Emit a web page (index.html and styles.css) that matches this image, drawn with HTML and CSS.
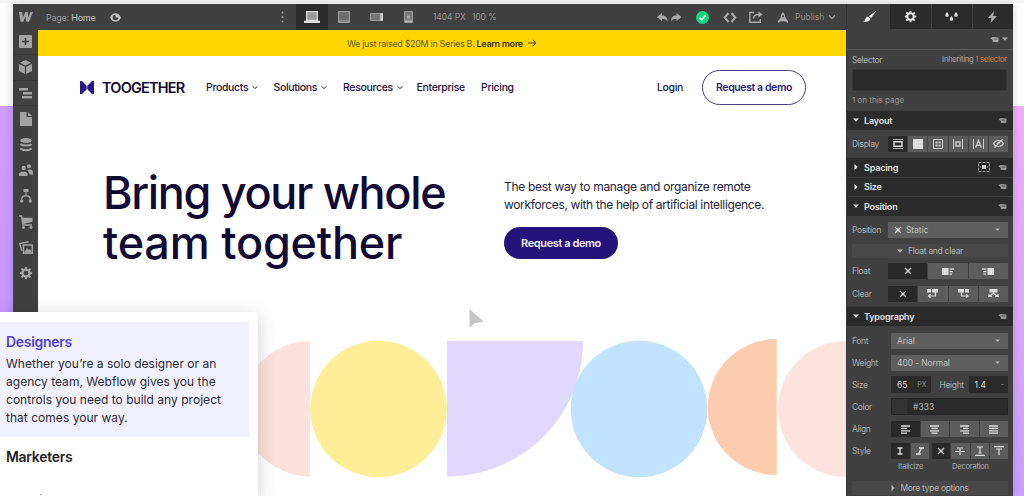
FILE: index.html
```html
<!DOCTYPE html>
<html lang="en">
<head>
    <meta charset="UTF-8">
    <meta name="viewport" content="width=device-width, initial-scale=1.0">
    <title>Toogether - Designer</title>
    <link rel="stylesheet" href="styles.css">
</head>
<body>
    <!-- shared icons -->
    <svg class="defs" width="0" height="0">
        <symbol id="gear" viewBox="0 0 16 16">
            <path fill-rule="evenodd" fill="currentColor" d="M7 1h2l.4 2 1.3.6L12.500 2.400l1.300 1.300-1.200 1.700.6 1.400 1.900.3v1.900l-1.900.3-.6 1.400 1.200 1.700-1.300 1.300-1.700-1.200-1.400.6L9 15H7l-.4-1.900-1.300-.6-1.800 1.200-1.300-1.300 1.200-1.700-.6-1.400L1 9V7l1.800-.3.6-1.400-1.200-1.700 1.300-1.300 1.700 1.200 1.400-.6zM8 5.300a2.700 2.700 0 1 0 0 5.400 2.700 2.700 0 0 0 0-5.400z"/>
        </symbol>
        <symbol id="cap" viewBox="0 0 10 8">
            <path fill="currentColor" d="M0 2.300 3.500 1 9.500 1.800V6.500H8.300V7L3 6.500V4.500zM8.300 3.200 3.500 3v.7l4.800.3z"/>
        </symbol>
        <symbol id="cross" viewBox="0 0 8 8">
            <path stroke="currentColor" stroke-width="1.200" d="M1 1l6 6M7 1L1 7"/>
        </symbol>
        <symbol id="down" viewBox="0 0 6 4">
            <path fill="currentColor" d="M0 .5h6L3 3.700z"/>
        </symbol>
        <symbol id="right" viewBox="0 0 4 6">
            <path fill="currentColor" d="M.5 0v6L3.700 3z"/>
        </symbol>
        <symbol id="chevron" viewBox="0 0 8 6">
            <path fill="none" stroke="currentColor" stroke-width="1.300" d="M1 1.500l3 3 3-3"/>
        </symbol>
    </svg>

    <div class="stage">
        <div class="designer">
            <aside class="sidebar">
                <span class="tool"><svg width="14" height="10" viewBox="0 0 14 10"><path fill="currentColor" d="M0 0h3.300l.5 5.500L6.500 0h2.300l.6 5.500L11.300 0H14L10 9.800H7.300l-.8-5-2.200 5H1.500z"/></svg></span>
                <span class="tool line"><svg width="13" height="13" viewBox="0 0 13 13"><rect width="13" height="13" rx="1" fill="currentColor"/><path stroke="#404040" stroke-width="1.600" d="M6.500 3v7M3 6.500h7"/></svg></span>
                <span class="tool line"><svg width="13" height="14" viewBox="0 0 13 14"><path fill="currentColor" d="M6.500 0 12 2.700 6.500 5.500 1 2.700zM0 4l5.900 2.700V14L0 11zM13 4 7.100 6.700V14l5.900-3z"/></svg></span>
                <span class="tool line"><svg width="13" height="11" viewBox="0 0 13 11"><path fill="currentColor" d="M0 0h9v2.600H0zM4 4h9v2.600H4zM3 8h10v2.600H3z"/></svg></span>
                <span class="tool"><svg width="12" height="14" viewBox="0 0 12 14"><path fill="currentColor" d="M0 0h6.500v5H12v9H0zM8 0l4 4H8z"/></svg></span>
                <span class="tool"><svg width="12" height="14" viewBox="0 0 12 14"><ellipse cx="6" cy="2.500" rx="5.700" ry="2.400" fill="currentColor"/><path fill="none" stroke="currentColor" stroke-width="2" d="M.5 6c2 2 9 2 11 0M.5 10.500c2 2.200 9 2.200 11 0"/></svg></span>
                <span class="tool"><svg width="14" height="12" viewBox="0 0 14 12"><g fill="currentColor"><circle cx="4.700" cy="4" r="2.200"/><circle cx="10" cy="2.300" r="2"/><path d="M0 12V9.500C1 7 8 7 8.500 9.500V12zM8.500 6.500C9 5 14 5 14 8v2.500h-3z"/></g></svg></span>
                <span class="tool"><svg width="12" height="14" viewBox="0 0 12 14"><g fill="currentColor"><rect x="3.500" width="5" height="3"/><circle cx="1.700" cy="12" r="1.700"/><circle cx="10.300" cy="12" r="1.700"/></g><path fill="none" stroke="currentColor" stroke-width="1.300" d="M6 3v3.500M1.700 10.500c0-5 8.600-5 8.600 0"/></svg></span>
                <span class="tool"><svg width="14" height="14" viewBox="0 0 14 14"><path fill="none" stroke="currentColor" stroke-width="1.400" d="M0 1h2.500l1.500 9h9"/><path fill="currentColor" d="M3 2.700h10.500V7L4 9z"/><circle cx="4.500" cy="12.500" r="1.500" fill="currentColor"/><circle cx="12" cy="12.500" r="1.500" fill="currentColor"/></svg></span>
                <span class="tool"><svg width="14" height="13" viewBox="0 0 14 13"><path fill="none" stroke="currentColor" stroke-width="1.400" d="M4.500 4h8.800v8.300H4.500zM2.700 9.500.8 2.500l9-1.800"/><path fill="currentColor" d="M5 11.500 8 7l2 2 1-1 2 3.500z"/></svg></span>
                <span class="tool"><svg width="14" height="14"><use href="#gear"/></svg></span>
            </aside>

            <main class="workspace">
                <header class="topbar">
                    <span class="page-name">Page: <b>Home</b></span>
                    <svg class="eye" width="11" height="9" viewBox="0 0 11 9"><path fill-rule="evenodd" fill="#c4c4c4" d="M0 4.500C2.500-1.200 8.500-1.200 11 4.500 8.500 10.200 2.500 10.200 0 4.500zM5.500 1.700a2.800 2.800 0 1 0 2.800 2.800H5.500z"/></svg>
                    <svg class="dots" width="3" height="12" viewBox="0 0 3 12"><g fill="#999"><circle cx="1.500" cy="1.500" r="1"/><circle cx="1.500" cy="6" r="1"/><circle cx="1.500" cy="10.500" r="1"/></g></svg>
                    <div class="devices">
                        <span class="device active"><svg width="16" height="12" viewBox="0 0 16 12"><path fill="#999" stroke="#d5d5d5" stroke-width="1.300" d="M2.600.7h10.800v8.600H2.600z"/><path fill="#e0e0e0" d="M0 9.700h16V12H0z"/></svg></span>
                        <span class="device"><svg width="12" height="12" viewBox="0 0 12 12"><path fill="#6c6c6c" stroke="#999" stroke-width="1.200" d="M.6.6h10.800v10.800H.6z"/><path stroke="#aaa" d="M1 10h10"/></svg></span>
                        <span class="device"><svg width="13" height="8" viewBox="0 0 13 8"><path fill="#777" stroke="#999" d="M.5.5h10v7H.5z"/><path fill="#ccc" d="M10.500 0H13v8h-2.500z"/></svg></span>
                        <span class="device"><svg width="9" height="12" viewBox="0 0 9 12"><path fill="#777" stroke="#999" d="M.5.5h8v11h-8z"/><circle cx="4.500" cy="6" r="1.700" fill="#aaa"/><path fill="#bbb" d="M1 9.500h7V11H1z"/></svg></span>
                    </div>
                    <span class="size">1404 PX</span>
                    <span class="size zoom">100 %</span>
                    <div class="actions">
                        <svg width="25" height="9" viewBox="0 0 25 9"><path fill="#aaa" d="M0 4 5 0v2.500c4 0 5.500 2.500 5.500 6C9 6.300 7.500 5.700 5 5.700V8zM24.500 4l-5-4v2.500c-4 0-5.500 2.500-5.500 6 1.500-2.200 3-2.800 5.500-2.800V8z"/></svg>
                        <svg class="saved" width="13" height="13" viewBox="0 0 13 13"><circle cx="6.500" cy="6.500" r="6.500" fill="#14d583"/><path fill="none" stroke="#fff" stroke-width="1.500" d="M3.600 6.700l2 2 3.900-4.100"/></svg>
                        <svg class="code" width="14" height="11" viewBox="0 0 14 11"><path fill="none" stroke="#aaa" stroke-width="2" d="M5.500 1 1.700 5.500l3.800 4.500M8.500 1l3.800 4.500L8.500 10"/></svg>
                        <svg class="share" width="14" height="12" viewBox="0 0 14 12"><path fill="none" stroke="#aaa" stroke-width="1.400" d="M5 1.500H.8v9.800h10.500V8M4.500 7.500c0-3 2-4 5.500-4"/><path fill="#aaa" d="M9.500.5 13.500 3.500l-4 3z"/></svg>
                        <svg class="rocket" width="10" height="11" viewBox="0 0 10 11"><path fill="#aaa" fill-rule="evenodd" d="M5 0c2 2 2.200 4 2.300 5.500L10 9v2L6.800 9.300H3.200L0 11V9l2.700-3.500C2.800 4 3 2 5 0zm0 3.200a1.100 1.100 0 1 0 0 2.200 1.100 1.100 0 0 0 0-2.200z"/></svg>
                        <span class="publish">Publish</span>
                        <svg class="publish-arrow" width="8" height="6"><use href="#chevron"/></svg>
                    </div>
                </header>

                <section class="site">
                    <div class="banner">
                        <span class="banner-text">We just raised $20M in Series B. <b>Learn more</b></span>
                        <svg width="9" height="8" viewBox="0 0 9 8"><path fill="none" stroke="#4a4220" d="M0 4h8M4.700.7 8 4 4.700 7.300"/></svg>
                    </div>
                    <nav class="nav">
                        <svg class="logo" width="14" height="13" viewBox="0 0 14 13"><path fill="#28187f" d="M0 0h2l4.700 4.700v3.600L2 13H0zM14 0h-2L7.300 4.700v3.600L12 13h2z"/></svg>
                        <span class="brand">TOOGETHER</span>
                        <div class="menu">
                            <span>Products <svg width="6" height="5"><use href="#chevron"/></svg></span>
                            <span>Solutions <svg width="6" height="5"><use href="#chevron"/></svg></span>
                            <span>Resources <svg width="6" height="5"><use href="#chevron"/></svg></span>
                            <span>Enterprise</span>
                            <span>Pricing</span>
                        </div>
                        <span class="login">Login</span>
                        <span class="demo outline">Request a demo</span>
                    </nav>
                    <div class="hero">
                        <h1>Bring your whole<br><span class="wide">team together</span></h1>
                        <div class="pitch">
                            <p>The best way to manage and organize remote<br><span class="tight">workforces, with the help of artificial intelligence.</span></p>
                            <span class="demo solid">Request a demo</span>
                        </div>
                    </div>
                    <svg class="shapes" width="808" height="196" viewBox="38 300 808 196">
                        <path fill="#fce2de" d="M310 341a67.750 67.750 0 0 0 0 135.500z"/>
                        <circle cx="378.500" cy="409" r="68.300" fill="#feee98"/>
                        <path fill="#e1d8ff" d="M447 341h136c0 75-60.500 135.500-136 135.500z"/>
                        <circle cx="639" cy="409" r="68.300" fill="#c1e3ff"/>
                        <path fill="#fdcbae" d="M776.700 339a69 68 0 0 0 0 136z"/>
                        <circle cx="846" cy="409" r="68" fill="#fde3df"/>
                        <path fill="#c6c6c6" stroke="#c6c6c6" stroke-linejoin="round" d="M470 310v17l5-4.500 8-1z"/>
                    </svg>
                </section>
            </main>

            <aside class="panel">
                <div class="tabs">
                    <span class="tab current"><svg width="13" height="11" viewBox="0 0 13 11"><path fill="#eee" d="M12.700 0 13 .4 8.200 7 6 5.200zM5.200 5.800l2.300 1.900C6.500 10.500 3 11.500 0 10.200c2-.2 2-1 2.500-2.500.5-1.300 1.500-2 2.700-1.900z"/></svg></span>
                    <span class="tab"><svg width="13" height="13"><use href="#gear"/></svg></span>
                    <span class="tab"><svg width="13" height="9" viewBox="0 0 13 9"><path fill="#ddd" d="M2 0c2.600 3.400 2 4.700 0 4.700S-.6 3.400 2 0zM6.500 4c2.600 3.400 2 4.800 0 4.800S3.900 7.400 6.500 4zM11 0c2.600 3.400 2 4.700 0 4.700S8.400 3.400 11 0z"/></svg></span>
                    <span class="tab"><svg width="9" height="12" viewBox="0 0 9 12"><path fill="#aaa" d="M6 0 0 7h3.500L2.500 12 9 5H5.200z"/></svg></span>
                </div>
                <div class="help"><svg width="9" height="7"><use href="#cap"/></svg><svg width="6" height="4"><use href="#down"/></svg></div>
                <div class="selector">
                    <div class="selector-top"><span>Selector</span><span class="inherit">Inheriting <em>1 selector</em></span></div>
                    <div class="selector-input"></div>
                    <div class="selector-note">1 on this page</div>
                </div>

                <h2 class="section"><svg class="arrow" width="6" height="4"><use href="#down"/></svg>Layout<svg class="cap" width="9" height="7"><use href="#cap"/></svg></h2>
                <div class="row display">
                    <label>Display</label>
                    <div class="buttons">
                        <span class="on"><svg width="10" height="10" viewBox="0 0 10 10"><path fill="none" stroke="#ddd" stroke-width="1.400" d="M1 2.700h8v4.600H1z"/><path fill="#aaa" d="M0 0h10v1H0zM0 9h10v1H0z"/></svg></span>
                        <span><svg width="10" height="10"><rect width="10" height="10" fill="#ddd"/></svg></span>
                        <span><svg width="10" height="10" viewBox="0 0 10 10"><path fill="none" stroke="#ccc" d="M.5.5h9v9h-9z"/><path fill="#ccc" d="M2.500 2.500h2v2h-2zM5.500 2.500h2v2h-2zM2.500 5.500h2v2h-2zM5.500 5.500h2v2h-2z"/></svg></span>
                        <span><svg width="10" height="10" viewBox="0 0 10 10"><path fill="none" stroke="#ccc" d="M.5 0v10M9.500 0v10"/><path fill="none" stroke="#ccc" stroke-width="1.500" d="M3 3h4v4H3z"/></svg></span>
                        <span><svg width="11" height="10" viewBox="0 0 11 10"><path fill="none" stroke="#ccc" d="M.5 0v10M10.500 0v10"/><path fill="none" stroke="#ccc" stroke-width="1.300" d="M2.700 8.500 5.500 1.500l2.800 7M3.700 6.300h3.600"/></svg></span>
                        <span><svg width="11" height="9" viewBox="0 0 11 9"><path fill="none" stroke="#ccc" stroke-width="1.200" d="M.6 4.500c2-4 7.800-4 9.800 0-2 4-7.800 4-9.800 0zM9.500.3l-8 8.400M4 5l2-2"/></svg></span>
                    </div>
                </div>

                <h2 class="section"><svg class="arrow" width="4" height="6"><use href="#right"/></svg>Spacing<svg class="spacing-box" width="12" height="10" viewBox="0 0 12 10"><path fill="none" stroke="#999" stroke-dasharray="3 1" d="M.5.5h11v9H.5z"/><path fill="#ccc" d="M4 3h4v4H4zM2 4.500h1v1H2zM9 4.500h1v1H9z"/></svg><svg class="cap" width="9" height="7"><use href="#cap"/></svg></h2>
                <h2 class="section"><svg class="arrow" width="4" height="6"><use href="#right"/></svg>Size<svg class="cap" width="9" height="7"><use href="#cap"/></svg></h2>
                <h2 class="section"><svg class="arrow" width="6" height="4"><use href="#down"/></svg>Position<svg class="cap" width="9" height="7"><use href="#cap"/></svg></h2>
                <div class="row position">
                    <label>Position</label>
                    <div class="select"><svg class="static" width="8" height="8"><use href="#cross"/></svg>Static<svg class="caret" width="5" height="3"><use href="#down"/></svg></div>
                </div>
                <div class="more"><svg width="6" height="4"><use href="#down"/></svg>Float and clear</div>
                <div class="row float">
                    <label>Float</label>
                    <div class="buttons">
                        <span class="on"><svg width="8" height="8"><use href="#cross"/></svg></span>
                        <span><svg width="12" height="7" viewBox="0 0 12 7"><path fill="#ddd" d="M0 0h6.500v7H0zM7.500.5H12v1.300H7.500zM7.500 3H11v1.300H7.500zM7.500 5.500H10v1.300H7.500z"/></svg></span>
                        <span><svg width="12" height="7" viewBox="0 0 12 7"><path fill="#ddd" d="M5.500 0H12v7H5.500zM0 .5h4.500v1.300H0zM1 3h3.500v1.300H1zM1.500 5.500H4v1.300H1.500z"/></svg></span>
                    </div>
                </div>
                <div class="row clear">
                    <label>Clear</label>
                    <div class="buttons">
                        <span class="on"><svg width="8" height="8"><use href="#cross"/></svg></span>
                        <span><svg width="11" height="9" viewBox="0 0 11 9"><path fill="#ddd" d="M0 0h4v3.500H0zM5 0h6v3.500H5z"/><path fill="none" stroke="#ddd" stroke-width="1.200" d="M8.500 3v4H2M3.500 5.300 1.500 7l2 1.700"/></svg></span>
                        <span><svg width="11" height="9" viewBox="0 0 11 9"><path fill="#ddd" d="M0 0h6v3.500H0zM7 0h4v3.500H7z"/><path fill="none" stroke="#ddd" stroke-width="1.200" d="M3.500 3v4H10M8 5.300 10 7 8 8.700"/></svg></span>
                        <span><svg width="11" height="9" viewBox="0 0 11 9"><path fill="#ddd" d="M1.500 0h8v3.500h-8z"/><path fill="none" stroke="#ddd" stroke-width="1.200" d="M5.500 3v1.500L1 7.300h3M5.500 4.500 10 7.300H7M1 5v2.500M10 5v2.500"/></svg></span>
                    </div>
                </div>

                <h2 class="section type"><svg class="arrow" width="6" height="4"><use href="#down"/></svg>Typography<svg class="cap" width="9" height="7"><use href="#cap"/></svg></h2>
                <div class="typography">
                    <div class="row"><label>Font</label><div class="select">Arial<svg class="caret" width="5" height="3"><use href="#down"/></svg></div></div>
                    <div class="row"><label>Weight</label><div class="select">400 - Normal<svg class="caret" width="5" height="3"><use href="#down"/></svg></div></div>
                    <div class="row sizes">
                        <label>Size</label>
                        <div class="field"><span>65</span><small>PX</small></div>
                        <label class="height">Height</label>
                        <div class="field"><span>1.4</span><small>-</small></div>
                    </div>
                    <div class="row"><label>Color</label><div class="color"><i></i><span>#333</span></div></div>
                    <div class="row align">
                        <label>Align</label>
                        <div class="buttons">
                            <span class="on"><svg width="9" height="9" viewBox="0 0 9 9"><path stroke="#ddd" stroke-width="1.300" d="M0 1h9M0 3.400h6M0 5.800h9M0 8.200h6"/></svg></span>
                            <span><svg width="9" height="9" viewBox="0 0 9 9"><path stroke="#ddd" stroke-width="1.300" d="M0 1h9M1.500 3.400h6M0 5.800h9M1.500 8.200h6"/></svg></span>
                            <span><svg width="9" height="9" viewBox="0 0 9 9"><path stroke="#ddd" stroke-width="1.300" d="M0 1h9M3 3.400h6M0 5.800h9M3 8.200h6"/></svg></span>
                            <span><svg width="9" height="9" viewBox="0 0 9 9"><path stroke="#ddd" stroke-width="1.300" d="M0 1h9M0 3.400h9M0 5.800h9M0 8.200h9"/></svg></span>
                        </div>
                    </div>
                    <div class="row style">
                        <label>Style</label>
                        <div class="buttons italic">
                            <span class="on"><svg width="6" height="8" viewBox="0 0 6 8"><path fill="none" stroke="#ddd" stroke-width="1.400" d="M.5 1h5M.5 7h5M3 1v6"/></svg></span>
                            <span><svg width="8" height="8" viewBox="0 0 8 8"><path fill="none" stroke="#ddd" stroke-width="1.400" d="M3 1h5M0 7h5M5.500 1l-3 6"/></svg></span>
                        </div>
                        <div class="buttons decoration">
                            <span class="on"><svg width="8" height="8"><use href="#cross"/></svg></span>
                            <span><svg width="10" height="8" viewBox="0 0 10 8"><path fill="none" stroke="#ddd" stroke-width="1.200" d="M2 1h6M5 1v7M0 4.500h10"/></svg></span>
                            <span><svg width="10" height="10" viewBox="0 0 10 10"><path fill="none" stroke="#ddd" stroke-width="1.200" d="M2 1h6M5 1v6M3.500 7h3M0 9.400h10"/></svg></span>
                            <span><svg width="10" height="10" viewBox="0 0 10 10"><path fill="none" stroke="#ddd" stroke-width="1.200" d="M0 .6h10M2 3h6M5 3v6"/></svg></span>
                        </div>
                    </div>
                    <div class="captions"><span>Italicize</span><span>Decoration</span></div>
                    <div class="more"><svg width="4" height="6"><use href="#right"/></svg>More type options</div>
                </div>
            </aside>
        </div>

        <div class="audience">
            <div class="audience-item open">
                <h3>Designers</h3>
                <p>Whether you’re a solo designer or an<br>agency team, Webflow gives you the<br>controls you need to build any project<br>that comes your way.</p>
            </div>
            <h3 class="audience-item">Marketers</h3>
            <i class="speck"></i>
        </div>
    </div>
</body>
</html>
```
FILE: styles.css
```css
* { box-sizing: border-box; }
body { margin: 0; background: #fff; font-family: Inter, "Liberation Sans", sans-serif; }
svg { display: block; flex: none; }
.defs { position: absolute; }
b { font-weight: 600; }

.stage { position: relative; width: 1024px; height: 496px; overflow: hidden; padding: 4px 11px 0 13px; background: linear-gradient(#f5f5f5 3px, #fdfdfd 3px, #fdfdfd 106px, transparent 106px), linear-gradient(to right, rgba(180, 140, 255, .55), rgba(180, 140, 255, 0)), linear-gradient(#eeb0f5 106px, #cba0ff 496px); }
.designer { display: flex; height: 492px; box-shadow: 0 0 9px rgba(0, 0, 0, .16); }

/* left tools */
.sidebar { width: 25px; background: #404040; color: #a3a3a3; }
.tool { display: flex; align-items: center; justify-content: center; height: 25.600px; }
.tool.line { border-bottom: 1px solid #393939; }

/* top bar */
.workspace { width: 808px; }
.topbar { display: flex; align-items: center; height: 26px; padding-left: 8px; background: #404040; color: #999; font-size: 9px; }
.page-name { width: 64px; letter-spacing: -.25px; }
.page-name b { color: #b5b5b5; font-weight: 500; }
.dots { margin-left: 160px; }
.devices { display: flex; align-self: stretch; margin-left: 12px; }
.device { display: flex; align-items: center; justify-content: center; width: 32px; }
.device.active { background: #2b2b2b; }
.size { margin-left: 9px; width: 31px; font-size: 8.500px; white-space: nowrap; letter-spacing: -.1px; }
.size.zoom { margin-left: 8px; }
.actions { display: flex; align-items: center; margin-left: auto; padding-right: 10px; }
.saved { margin-left: 14px; }
.code { margin-left: 14px; }
.share { margin-left: 12px; }
.rocket { margin-left: 15px; }
.publish { width: 33px; margin-left: 7px; font-size: 8.500px; color: #8f8f8f; }

/* site on the canvas */
.site { height: 466px; background: #fff; }
.banner { display: flex; align-items: center; height: 26px; padding-left: 309px; background: #ffd600; color: #6a5c12; font-size: 9px; }
.banner-text { width: 181px; white-space: nowrap; letter-spacing: -.33px; }
.banner b { color: #3a3417; }
.nav { display: flex; align-items: center; height: 62px; padding-left: 42px; color: #1b1440; font-size: 10.500px; font-weight: 500; }
.brand { width: 104px; margin-left: 8px; color: #120b33; font-size: 14.500px; font-weight: 600; letter-spacing: -.8px; }
.menu { display: grid; grid-template-columns: 67.500px 69.500px 73.500px 64.500px auto; width: 451px; letter-spacing: -.33px; }
.menu span { display: flex; align-items: center; gap: 4px; }
.login { width: 45px; letter-spacing: -.35px; }
.demo { display: flex; align-items: center; justify-content: center; border-radius: 18px; font-size: 10.500px; font-weight: 600; letter-spacing: -.4px; }
.outline { width: 104px; height: 35px; border: 1px solid #4a4080; color: #2b1d7c; }
.solid { width: 114px; height: 32px; background: #24147a; color: #f1efff; font-size: 11px; }
.hero { display: flex; height: 182px; padding: 50px 0 0 65px; }
h1 { width: 401px; margin: 0; color: #100a35; font-size: 45px; font-weight: 500; line-height: 50px; letter-spacing: -1.350px; white-space: nowrap; }
.wide { letter-spacing: -.2px; }
.pitch p { margin: 10px 0 13px; color: #252240; font-size: 12px; line-height: 18px; letter-spacing: -.3px; white-space: nowrap; }
.pitch p { letter-spacing: -.35px; word-spacing: .2px; }
.tight { word-spacing: 0; }

/* style panel */
.panel { width: 167px; height: 492px; overflow: hidden; background: #404040; border-left: 1px solid #333; color: #adadad; font-size: 8.500px; }
.tabs { display: flex; height: 25px; padding-left: 1px; }
.tab { display: flex; flex: 1; align-items: center; justify-content: center; background: #2b2b2b; border-left: 1px solid #404040; color: #e5e5e5; }
.tab.current { background: #404040; }
.help { display: flex; align-items: center; justify-content: flex-end; gap: 3px; height: 21px; padding-right: 5px; border-bottom: 1px solid #565656; color: #aaa; }
.selector { height: 60px; padding: 0 6px 0 5px; }
.selector-top { display: flex; align-items: center; justify-content: space-between; height: 19px; letter-spacing: -.4px; }
.inherit { font-size: 7.500px; letter-spacing: -.2px; }
.inherit em { color: #e07b3a; font-style: normal; }
.selector-input { height: 22px; background: #2b2b2b; border: 1px solid #363636; border-radius: 2px; }
.selector-note { height: 19px; font-size: 8px; line-height: 18px; color: #999; }
.section { display: flex; align-items: center; height: 19.500px; margin: 0; padding: 0 6px; background: #2b2b2b; border-top: 1px solid #3c3c3c; color: #e2e2e2; font-size: 9px; font-weight: 600; letter-spacing: -.2px; }
.arrow { width: 6px; margin-right: 5px; }
.cap { margin-left: auto; color: #999; }
.spacing-box { margin-left: auto; }
.spacing-box + .cap { margin-left: 8px; }
.row { display: flex; align-items: center; padding: 0 5px; }
.row label { width: 36px; flex: none; letter-spacing: -.35px; }
.display { height: 27.500px; padding-top: 1px; }
.buttons { display: flex; flex: 1; gap: 1px; height: 16px; }
.buttons span { display: flex; flex: 1; align-items: center; justify-content: center; background: #5c5c5c; color: #ddd; }
.buttons .on { background: #292929; }
.select { display: flex; flex: 1; align-items: center; height: 16px; padding: 0 8px 0 6px; background: #5e5e5e; border-radius: 1px; color: #c0c0c0; letter-spacing: -.1px; }
.static { margin-right: 4px; color: #eee; }
.caret { margin-left: auto; }
.position { height: 28px; }
.more { display: flex; align-items: center; justify-content: center; gap: 5px; height: 14px; margin: 0 5px; background: #484848; border-radius: 2px; color: #b5b5b5; letter-spacing: -.3px; }
.float { height: 27px; }
.clear { height: 18px; }
.type { height: 20px; margin-top: 3px; }
.typography { padding-top: 4px; }
.typography .row { height: 22.150px; }
.typography label { width: 39px; }
.field { display: flex; align-items: center; justify-content: space-between; width: 40px; height: 17px; padding: 0 4px 0 6px; background: #2b2b2b; color: #ddd; }
.field small { color: #888; font-size: 7px; }
.typography .height { width: 38px; padding-left: 9px; }
.color { display: flex; align-items: center; flex: 1; height: 17px; background: #2b2b2b; border: 1px solid #252525; }
.color i { width: 15px; height: 15px; background: #333; }
.color span { margin-left: 6px; }
.italic { flex: none; width: 38px; margin-right: 3px; }
.captions { display: flex; height: 10px; font-size: 7.500px; line-height: 10px; letter-spacing: -.2px; }
.captions span:first-child { width: 54px; margin-left: 51px; }
.typography .more { margin-top: 9px; }

/* audience card, lies over the designer window */
.audience { position: absolute; left: 0; top: 312px; width: 258px; height: 190px; padding-top: 10px; background: #fff; box-shadow: 0 4px 18px rgba(0, 0, 0, .2); }
.audience h3 { margin: 0; padding-left: 6px; color: #222; font-size: 14px; font-weight: 600; line-height: 20px; letter-spacing: -.3px; }
.open { width: 249px; height: 115px; padding-top: 10px; background: #f1f0ff; }
.audience .open h3 { color: #5340cf; }
.open p { margin: 3px 0 0 6px; color: #2a2a35; font-size: 12px; line-height: 18px; letter-spacing: .03px; white-space: nowrap; }
.audience h3.audience-item { margin-top: 10px; }
.speck { display: block; width: 2px; height: 1px; margin: 27px 0 0 40px; background: #aaa; }
```
